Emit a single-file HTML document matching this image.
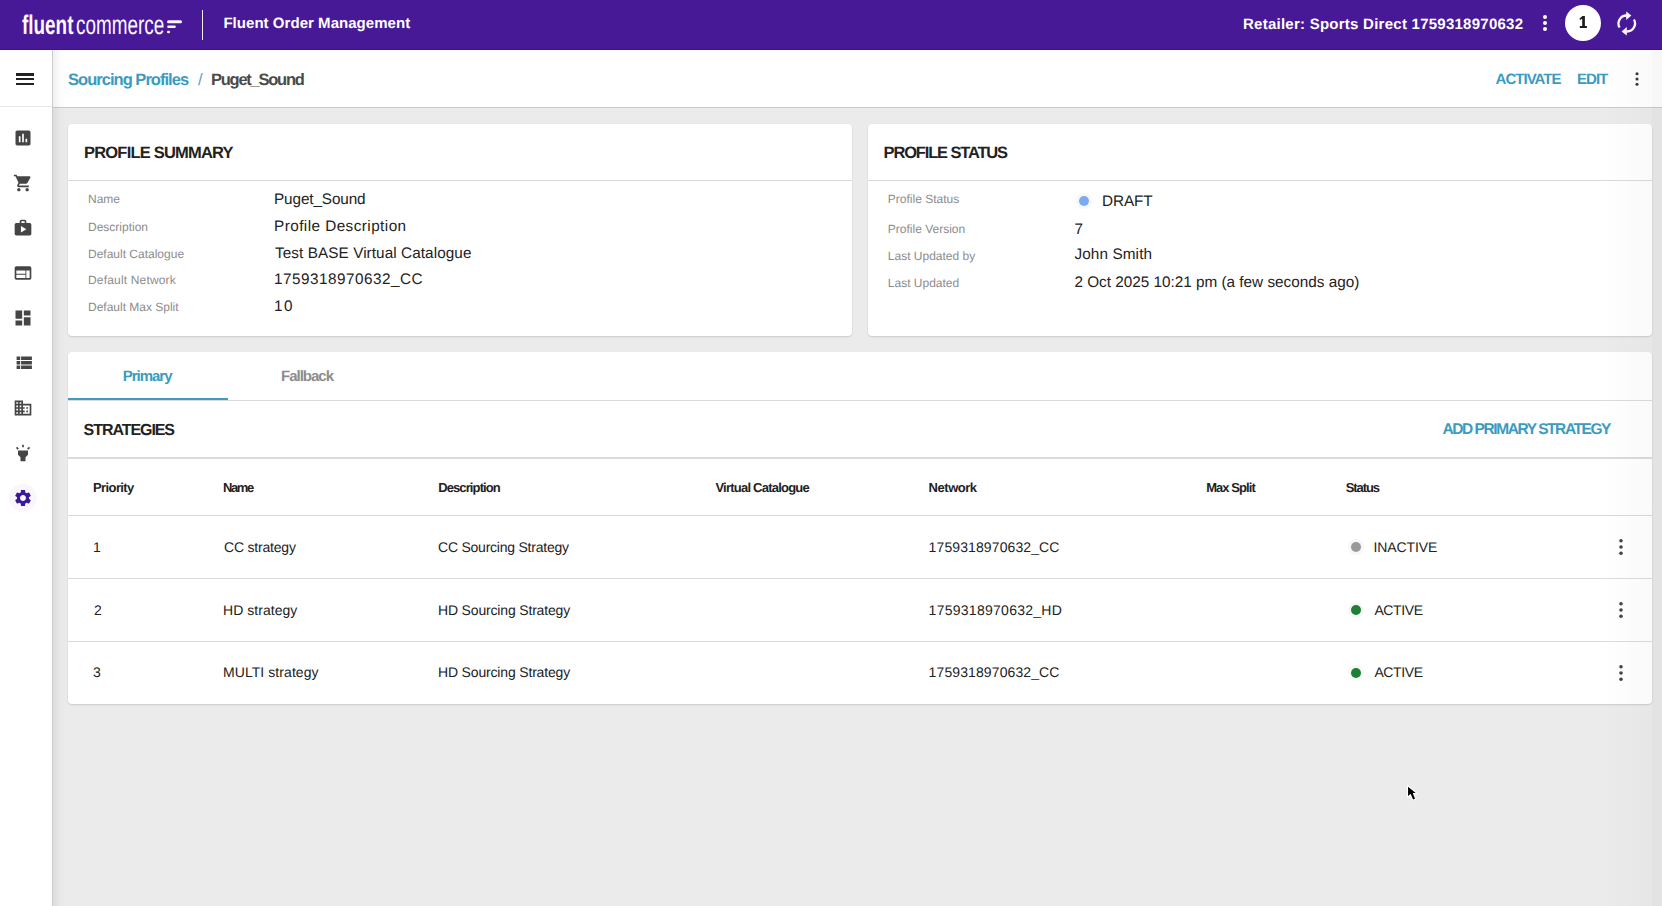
<!DOCTYPE html>
<html><head><meta charset="utf-8">
<style>
*{box-sizing:border-box;margin:0;padding:0}
html,body{width:1662px;height:906px;overflow:hidden;background:#ebebeb;font-family:"Liberation Sans",sans-serif}
.a{position:absolute}
.t{position:absolute;white-space:nowrap;line-height:normal;font-family:"Liberation Sans",sans-serif;text-rendering:geometricPrecision}
#hdr{left:0;top:0;width:1662px;height:50px;background:#481996}
#side{left:0;top:50px;width:53px;height:856px;background:#fff;border-right:1px solid #cdcdcd}
#sub{left:53px;top:50px;width:1609px;height:58px;background:#fff;border-bottom:1px solid #cbcbcb}
.card{position:absolute;background:#fff;border-radius:4px;box-shadow:0 1px 2px rgba(0,0,0,0.14),0 0 1px rgba(0,0,0,0.05)}
.hl{position:absolute;height:1px;background:#dbdbdb}
.dot{position:absolute;border-radius:50%;box-shadow:0 0 1px 3px rgba(0,0,0,0.035)}
svg{position:absolute;overflow:visible}
</style></head><body>
<div id="hdr" class="a"></div>
<div id="side" class="a"></div>
<div class="a" style="left:0;top:106px;width:52px;height:1px;background:#e6e6e6"></div>
<div id="sub" class="a"></div>
<div class="a" style="left:53px;top:50px;width:14px;height:856px;background:linear-gradient(to right,rgba(0,0,0,0.06),rgba(0,0,0,0.015) 50%,rgba(0,0,0,0))"></div>
<div class="a" style="left:0;top:49px;width:1662px;height:1px;background:#3d1482"></div>

<!-- header decorations -->
<div class="a" style="left:202px;top:10px;width:1px;height:30px;background:#f4eefc"></div>
<div class="a" style="left:1565px;top:5px;width:36px;height:36px;border-radius:50%;background:#fff"></div>
<svg class="a" style="left:1579px;top:15px" width="9" height="14" viewBox="0 0 9 14"><path fill="#1e1e1e" d="M3.5 1 H5.9 V11.1 H7.9 V12.9 H0.8 V11.1 H3.2 V3.7 L1.1 5 L0.5 3.5 Z"/></svg>

<!-- cards -->
<div class="card" style="left:68px;top:124px;width:784px;height:212px"></div>
<div class="hl" style="left:68px;top:180px;width:784px"></div>
<div class="card" style="left:868px;top:124px;width:784px;height:212px"></div>
<div class="hl" style="left:868px;top:180px;width:784px"></div>
<div class="card" style="left:68px;top:352px;width:1584px;height:352px"></div>
<div class="hl" style="left:68px;top:400px;width:1584px"></div>
<div class="a" style="left:68px;top:398px;width:160px;height:2px;background:#4499be"></div>
<div class="hl" style="left:68px;top:457px;width:1584px;height:2px"></div>
<div class="hl" style="left:68px;top:515px;width:1584px"></div>
<div class="hl" style="left:68px;top:578px;width:1584px"></div>
<div class="hl" style="left:68px;top:641px;width:1584px"></div>

<div class="a" style="left:1600px;top:50px;width:52px;height:856px;background:linear-gradient(to right,rgba(0,0,0,0),rgba(0,0,0,0.02))"></div>
<div class="a" style="left:1652px;top:50px;width:10px;height:856px;background:rgba(0,0,0,0.03)"></div>
<!-- dots -->
<div class="dot" style="left:1079px;top:195.5px;width:10px;height:10px;background:#7aaaf0"></div>
<div class="dot" style="left:1351px;top:542px;width:10px;height:10px;background:#999"></div>
<div class="dot" style="left:1351px;top:605px;width:10px;height:10px;background:#1f7f35"></div>
<div class="dot" style="left:1351px;top:668px;width:10px;height:10px;background:#1f7f35"></div>


<!-- logo -->
<div class="t" style="left:22px;top:10.4px;font-size:27px;font-weight:700;color:#fdf8ff;transform:scaleX(0.70);transform-origin:0 0">fluent</div>
<div class="t" style="left:76px;top:10.4px;font-size:27px;font-weight:400;color:#fdf8ff;transform:scaleX(0.70);transform-origin:0 0">commerce</div>
<svg class="a" style="left:0;top:0" width="200" height="50"><g stroke="#fdf8ff" stroke-linecap="round" fill="none"><line x1="168.5" y1="21.7" x2="180.5" y2="21.7" stroke-width="3"/><line x1="168.5" y1="26.7" x2="174.5" y2="26.7" stroke-width="2.6"/><line x1="168.3" y1="32" x2="168.8" y2="32" stroke-width="2.6"/></g></svg>
<!-- header kebab -->
<svg class="a" style="left:1533px;top:11px" width="24" height="24"><g fill="#fff"><circle cx="12" cy="6" r="2"/><circle cx="12" cy="12" r="2"/><circle cx="12" cy="18" r="2"/></g></svg>
<!-- refresh -->
<svg class="a" style="left:1615px;top:11px" width="24" height="26" viewBox="0 0 24 26"><g fill="none" stroke="#fbf5ff" stroke-width="2.3"><path d="M4.57 16.5 A8 8 0 0 1 12 4.5"/><path d="M18.93 8.5 A8 8 0 0 1 11.5 20.5"/></g><g fill="#fbf5ff"><path d="M11.2 0.6 L16.4 4.6 L11.2 9 Z"/><path d="M11.8 16 L6.6 20.5 L11.8 24.5 Z"/></g></svg>
<!-- hamburger -->
<svg class="a" style="left:13px;top:67px" width="24" height="24" viewBox="0 0 24 24"><path fill="#222" d="M3 18h18v-2H3v2zm0-5h18v-2H3v2zm0-6v2h18V6H3z"/></svg>
<!-- subheader kebab -->
<svg class="a" style="left:1627px;top:69px" width="20" height="20"><g fill="#3a3a3a"><circle cx="10" cy="4.7" r="1.55"/><circle cx="10" cy="10" r="1.55"/><circle cx="10" cy="15.3" r="1.55"/></g></svg>
<!-- row kebabs -->
<svg class="a" style="left:1610.5px;top:537.2px" width="20" height="20"><g fill="#444"><circle cx="10" cy="3.8" r="1.8"/><circle cx="10" cy="10" r="1.8"/><circle cx="10" cy="16.2" r="1.8"/></g></svg>
<svg class="a" style="left:1610.5px;top:600.2px" width="20" height="20"><g fill="#444"><circle cx="10" cy="3.8" r="1.8"/><circle cx="10" cy="10" r="1.8"/><circle cx="10" cy="16.2" r="1.8"/></g></svg>
<svg class="a" style="left:1610.5px;top:663.2px" width="20" height="20"><g fill="#444"><circle cx="10" cy="3.8" r="1.8"/><circle cx="10" cy="10" r="1.8"/><circle cx="10" cy="16.2" r="1.8"/></g></svg>
<!-- sidebar icons -->
<svg class="a" style="left:13px;top:128px" width="20" height="20" viewBox="0 0 24 24"><path fill="#454545" d="M19 3H5c-1.1 0-2 .9-2 2v14c0 1.1.9 2 2 2h14c1.1 0 2-.9 2-2V5c0-1.1-.9-2-2-2zM9 17H7v-7h2v7zm4 0h-2V7h2v10zm4 0h-2v-4h2v4z"/></svg>
<svg class="a" style="left:13px;top:173px" width="20" height="20" viewBox="0 0 24 24"><path fill="#454545" d="M7 18c-1.1 0-1.99.9-1.99 2S5.9 22 7 22s2-.9 2-2-.9-2-2-2zM1 2v2h2l3.6 7.59-1.35 2.45c-.16.28-.25.61-.25.96 0 1.1.9 2 2 2h12v-2H7.42c-.14 0-.25-.11-.25-.25l.03-.12.9-1.630h7.45c.75 0 1.41-.41 1.750-1.03l3.58-6.490c.08-.14.12-.31.12-.48 0-.55-.45-1-1-1H5.21l-.94-2H1zm16 16c-1.1 0-1.99.9-1.99 2s.89 2 1.990 2 2-.9 2-2-.9-2-2-2z"/></svg>
<svg class="a" style="left:13px;top:218px" width="20" height="20" viewBox="0 0 24 24"><path fill="#454545" d="M20 6h-4V4c0-1.11-.89-2-2-2h-4c-1.11 0-2 .89-2 2v2H4c-1.11 0-1.99.89-1.99 2L2 19c0 1.11.89 2 2 2h16c1.11 0 2-.89 2-2V8c0-1.11-.89-2-2-2zm-6 0h-4V4h4v2z"/><path fill="#fff" d="M9.5 9.5v8l6.5-4z"/></svg>
<svg class="a" style="left:13px;top:263px" width="20" height="20" viewBox="0 0 24 24"><path fill="#454545" d="M20 4H4c-1.1 0-1.99.9-1.99 2L2 18c0 1.1.9 2 2 2h16c1.1 0 2-.9 2-2V6c0-1.1-.9-2-2-2zm-5 14H4v-4h11v4zm0-5H4V9h11v4zm5 5h-4V9h4v9z"/></svg>
<svg class="a" style="left:13px;top:308px" width="20" height="20" viewBox="0 0 24 24"><path fill="#454545" d="M3 13h8V3H3v10zm0 8h8v-6H3v6zm10 0h8V11h-8v10zm0-18v6h8V3h-8z"/></svg>
<svg class="a" style="left:12.6px;top:352.2px" width="21.6" height="21.6" viewBox="0 0 24 24"><path fill="#454545" d="M4 14h4v-4H4v4zm0 5h4v-4H4v4zM4 9h4V5H4v4zm5 5h12v-4H9v4zm0 5h12v-4H9v4zM9 5v4h12V5H9z"/></svg>
<svg class="a" style="left:13px;top:398px" width="20" height="20" viewBox="0 0 24 24"><path fill="#454545" d="M12 7V3H2v18h20V7H12zM6 19H4v-2h2v2zm0-4H4v-2h2v2zm0-4H4V9h2v2zm0-4H4V5h2v2zm4 12H8v-2h2v2zm0-4H8v-2h2v2zm0-4H8V9h2v2zm0-4H8V5h2v2zm10 12h-8v-2h2v-2h-2v-2h2v-2h-2V9h8v10zm-2-8h-2v2h2v-2zm0 4h-2v2h2v-2z"/></svg>
<svg class="a" style="left:13px;top:443px" width="20" height="20" viewBox="0 0 24 24"><path fill="#454545" d="M6 14l3 3v5h6v-5l3-3V9H6zm5-12h2v3h-2zM3.5 5.875L4.914 4.46l2.12 2.122L5.62 7.997zm13.46.71l2.123-2.12 1.414 1.414L18.375 8z"/></svg>
<div class="a" style="left:9px;top:484px;width:28px;height:28px;border-radius:50%;background:#faf6fc"></div>
<svg class="a" style="left:13px;top:487.5px" width="20" height="20" viewBox="0 0 24 24"><path fill="#3b1a9a" d="M19.14 12.94c.04-.3.06-.61.06-.94 0-.32-.02-.64-.07-.94l2.03-1.58c.18-.14.23-.41.12-.61l-1.92-3.32c-.12-.22-.37-.29-.59-.22l-2.39.96c-.5-.38-1.030-.7-1.62-.94l-.36-2.54c-.04-.24-.24-.41-.48-.41h-3.84c-.24 0-.43.17-.47.41l-.36 2.54c-.59.24-1.13.57-1.62.94l-2.39-.96c-.22-.08-.47 0-.59.22L2.74 8.87c-.12.21-.08.47.12.61l2.03 1.58c-.05.3-.09.63-.09.94s.02.64.07.94l-2.03 1.58c-.18.14-.23.41-.12.61l1.92 3.32c.12.22.37.29.59.22l2.39-.96c.5.38 1.03.7 1.62.94l.36 2.54c.05.24.24.41.48.41h3.840c.24 0 .44-.17.47-.41l.36-2.54c.59-.24 1.13-.56 1.62-.94l2.39.96c.22.08.47 0 .59-.22l1.92-3.32c.12-.22.07-.47-.12-.61l-2.01-1.58zM12 15.6c-1.98 0-3.6-1.62-3.6-3.6s1.62-3.6 3.6-3.6 3.6 1.62 3.6 3.6-1.62 3.6-3.6 3.6z"/></svg>
<!-- cursor -->
<svg class="a" style="left:1405px;top:782px" width="16" height="22" viewBox="0 0 16 22"><path d="M2.5 3.5 L2.5 15.5 L5.4 12.7 L7.8 18.3 L10.8 17 L8.5 11.6 L12.3 11.6 Z" fill="#000" stroke="#fff" stroke-width="1.1" stroke-linejoin="round"/></svg>

<div class="t" id="t0" style="left:223.40px;top:15.02px;font-size:15px;font-weight:700;color:#fff;letter-spacing:0.041px;">Fluent Order Management</div>
<div class="t" id="t1" style="left:1243.00px;top:15.62px;font-size:15px;font-weight:700;color:#fff;letter-spacing:0.250px;">Retailer: Sports Direct 1759318970632</div>
<div class="t" id="t2" style="left:68.00px;top:71.07px;font-size:16.5px;font-weight:700;color:#3a9bc1;letter-spacing:-0.969px;">Sourcing Profiles</div>
<div class="t" id="t3" style="left:198.00px;top:71.07px;font-size:16.5px;font-weight:400;color:#5aa2c4;">/</div>
<div class="t" id="t4" style="left:211.00px;top:71.07px;font-size:16.5px;font-weight:700;color:#4a4a4a;letter-spacing:-1.250px;">Puget_Sound</div>
<div class="t" id="t5" style="left:1495.60px;top:70.62px;font-size:15px;font-weight:700;color:#3a9bc1;letter-spacing:-0.986px;">ACTIVATE</div>
<div class="t" id="t6" style="left:1577.00px;top:70.62px;font-size:15px;font-weight:700;color:#3a9bc1;letter-spacing:-0.967px;">EDIT</div>
<div class="t" id="t7" style="left:84.00px;top:144.47px;font-size:16.5px;font-weight:700;color:#222;letter-spacing:-0.800px;">PROFILE SUMMARY</div>
<div class="t" id="t8" style="left:88.00px;top:192.34px;font-size:12px;font-weight:400;color:#8c8c8c;">Name</div>
<div class="t" id="t9" style="left:88.00px;top:219.94px;font-size:12px;font-weight:400;color:#8c8c8c;">Description</div>
<div class="t" id="t10" style="left:88.00px;top:246.94px;font-size:12px;font-weight:400;color:#8c8c8c;">Default Catalogue</div>
<div class="t" id="t11" style="left:88.00px;top:272.74px;font-size:12px;font-weight:400;color:#8c8c8c;letter-spacing:0.171px;">Default Network</div>
<div class="t" id="t12" style="left:88.00px;top:300.34px;font-size:12px;font-weight:400;color:#8c8c8c;letter-spacing:-0.006px;">Default Max Split</div>
<div class="t" id="t13" style="left:274.00px;top:191.35px;font-size:15.3px;font-weight:400;color:#222;letter-spacing:-0.110px;">Puget_Sound</div>
<div class="t" id="t14" style="left:274.00px;top:217.95px;font-size:15.3px;font-weight:400;color:#222;letter-spacing:0.444px;">Profile Description</div>
<div class="t" id="t15" style="left:275.00px;top:244.95px;font-size:15.3px;font-weight:400;color:#222;letter-spacing:0.077px;">Test BASE Virtual Catalogue</div>
<div class="t" id="t16" style="left:274.00px;top:270.75px;font-size:15.3px;font-weight:400;color:#222;letter-spacing:0.493px;">1759318970632_CC</div>
<div class="t" id="t17" style="left:274.00px;top:298.35px;font-size:15.3px;font-weight:400;color:#222;letter-spacing:1.400px;">10</div>
<div class="t" id="t18" style="left:883.60px;top:143.87px;font-size:16.5px;font-weight:700;color:#222;letter-spacing:-1.162px;">PROFILE STATUS</div>
<div class="t" id="t19" style="left:887.80px;top:191.94px;font-size:12px;font-weight:400;color:#8c8c8c;">Profile Status</div>
<div class="t" id="t20" style="left:887.80px;top:222.34px;font-size:12px;font-weight:400;color:#8c8c8c;">Profile Version</div>
<div class="t" id="t21" style="left:887.80px;top:249.34px;font-size:12px;font-weight:400;color:#8c8c8c;">Last Updated by</div>
<div class="t" id="t22" style="left:887.80px;top:276.34px;font-size:12px;font-weight:400;color:#8c8c8c;">Last Updated</div>
<div class="t" id="t23" style="left:1102.00px;top:193.35px;font-size:15.3px;font-weight:400;color:#222;letter-spacing:-0.100px;">DRAFT</div>
<div class="t" id="t24" style="left:1074.40px;top:220.95px;font-size:15.3px;font-weight:400;color:#222;">7</div>
<div class="t" id="t25" style="left:1074.40px;top:246.35px;font-size:15.3px;font-weight:400;color:#222;letter-spacing:0.122px;">John Smith</div>
<div class="t" id="t26" style="left:1074.40px;top:274.35px;font-size:15.3px;font-weight:400;color:#222;">2 Oct 2025 10:21 pm (a few seconds ago)</div>
<div class="t" id="t27" style="left:122.80px;top:367.63px;font-size:15px;font-weight:700;color:#3a9bc1;letter-spacing:-1.033px;">Primary</div>
<div class="t" id="t28" style="left:281.00px;top:367.63px;font-size:15px;font-weight:700;color:#8c8c8c;letter-spacing:-1.000px;">Fallback</div>
<div class="t" id="t29" style="left:83.60px;top:421.92px;font-size:16px;font-weight:700;color:#222;letter-spacing:-1.067px;">STRATEGIES</div>
<div class="t" id="t30" style="left:1442.40px;top:420.97px;font-size:15.5px;font-weight:700;color:#3a9bc1;letter-spacing:-1.421px;">ADD PRIMARY STRATEGY</div>
<div class="t" id="t31" style="left:93.00px;top:480.04px;font-size:13px;font-weight:700;color:#222;letter-spacing:-0.600px;">Priority</div>
<div class="t" id="t32" style="left:223.00px;top:480.04px;font-size:13px;font-weight:700;color:#222;letter-spacing:-1.400px;">Name</div>
<div class="t" id="t33" style="left:438.20px;top:480.04px;font-size:13px;font-weight:700;color:#222;letter-spacing:-0.890px;">Description</div>
<div class="t" id="t34" style="left:715.40px;top:480.04px;font-size:13px;font-weight:700;color:#222;letter-spacing:-0.769px;">Virtual Catalogue</div>
<div class="t" id="t35" style="left:928.60px;top:480.04px;font-size:13px;font-weight:700;color:#222;letter-spacing:-0.467px;">Network</div>
<div class="t" id="t36" style="left:1206.20px;top:480.04px;font-size:13px;font-weight:700;color:#222;letter-spacing:-0.938px;">Max Split</div>
<div class="t" id="t37" style="left:1345.80px;top:480.04px;font-size:13px;font-weight:700;color:#222;letter-spacing:-1.120px;">Status</div>
<div class="t" id="t38" style="left:93.00px;top:538.53px;font-size:14px;font-weight:400;color:#222;">1</div>
<div class="t" id="t39" style="left:224.00px;top:538.53px;font-size:14px;font-weight:400;color:#222;letter-spacing:-0.200px;">CC strategy</div>
<div class="t" id="t40" style="left:438.00px;top:538.53px;font-size:14px;font-weight:400;color:#222;letter-spacing:-0.232px;">CC Sourcing Strategy</div>
<div class="t" id="t41" style="left:928.60px;top:538.53px;font-size:14px;font-weight:400;color:#222;letter-spacing:0.107px;">1759318970632_CC</div>
<div class="t" id="t42" style="left:1373.40px;top:538.53px;font-size:14px;font-weight:400;color:#222;letter-spacing:-0.086px;">INACTIVE</div>
<div class="t" id="t43" style="left:94.00px;top:601.53px;font-size:14px;font-weight:400;color:#222;">2</div>
<div class="t" id="t44" style="left:223.00px;top:601.53px;font-size:14px;font-weight:400;color:#222;letter-spacing:0.040px;">HD strategy</div>
<div class="t" id="t45" style="left:438.00px;top:601.53px;font-size:14px;font-weight:400;color:#222;letter-spacing:-0.168px;">HD Sourcing Strategy</div>
<div class="t" id="t46" style="left:928.60px;top:601.53px;font-size:14px;font-weight:400;color:#222;letter-spacing:0.267px;">1759318970632_HD</div>
<div class="t" id="t47" style="left:1374.40px;top:601.53px;font-size:14px;font-weight:400;color:#222;letter-spacing:-0.360px;">ACTIVE</div>
<div class="t" id="t48" style="left:93.00px;top:663.53px;font-size:14px;font-weight:400;color:#222;">3</div>
<div class="t" id="t49" style="left:223.00px;top:663.53px;font-size:14px;font-weight:400;color:#222;letter-spacing:0.069px;">MULTI strategy</div>
<div class="t" id="t50" style="left:438.00px;top:663.53px;font-size:14px;font-weight:400;color:#222;letter-spacing:-0.168px;">HD Sourcing Strategy</div>
<div class="t" id="t51" style="left:928.60px;top:663.53px;font-size:14px;font-weight:400;color:#222;letter-spacing:0.107px;">1759318970632_CC</div>
<div class="t" id="t52" style="left:1374.40px;top:663.53px;font-size:14px;font-weight:400;color:#222;letter-spacing:-0.360px;">ACTIVE</div>
</body></html>
